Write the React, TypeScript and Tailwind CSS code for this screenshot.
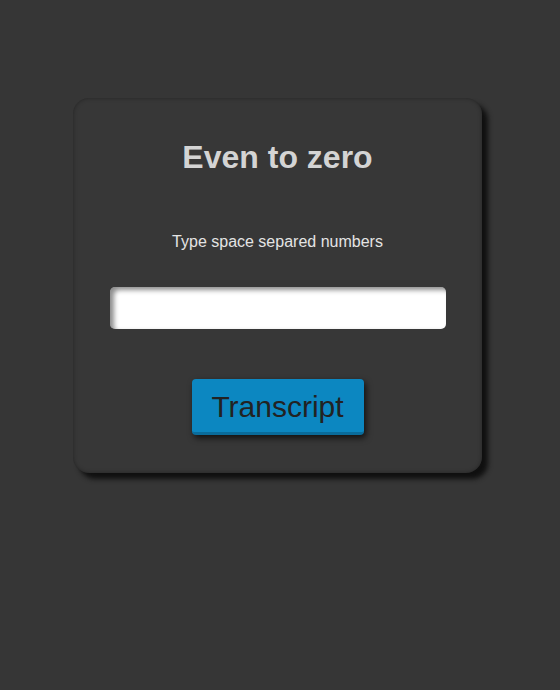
import React from "react";

export default function App() {
  return (
    <div className="min-h-[690px] w-[560px] bg-[#363636] pt-[98px] pl-[73px]" style={{ fontFamily: '"Liberation Sans", Arial, sans-serif' }}>
      <div className="flex h-[375px] w-[409px] flex-col items-center rounded-[16px] bg-[#373737] pt-[41px] shadow-[6px_6px_5px_#101010,inset_0_0_4px_rgba(0,0,0,0.35)]">
        <h1 className="m-0 text-[32px] font-bold leading-[37px] text-[#d4d4d4]">Even to zero</h1>
        <p className="mt-[57px] text-[16px] leading-[18px] text-[#e4e4e4]">Type space separed numbers</p>
        <input
          type="text"
          className="mt-[36px] h-[42px] w-[336px] rounded-[5px] bg-white px-2 text-[16px] outline-none shadow-[inset_4px_3px_5px_rgba(0,0,0,0.45)]"
        />
        <button className="mt-[50px] h-[56px] w-[172px] rounded-[4px] border-b-[3px] border-[#0a6c9b] bg-[#0c87c1] pt-[2px] text-[30px] leading-none text-[#222222] shadow-[2px_3px_6px_rgba(0,0,0,0.7)]">
          Transcript
        </button>
      </div>
    </div>
  );
}
